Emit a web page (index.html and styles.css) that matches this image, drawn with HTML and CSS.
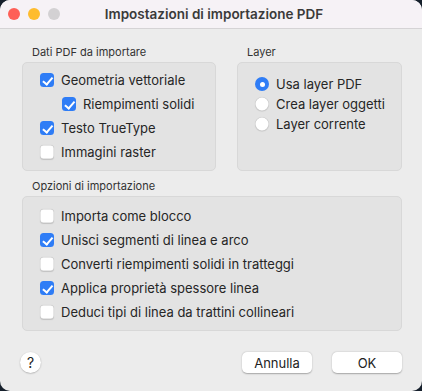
FILE: index.html
```html
<!DOCTYPE html>
<html lang="it">
<head>
    <meta charset="UTF-8">
    <meta name="viewport" content="width=device-width, initial-scale=1.0">
    <title>Impostazioni di importazione PDF</title>
    <link rel="stylesheet" href="styles.css">
</head>
<body>
    <div class="window">
        <div class="titlebar">
            <div class="lights">
                <span class="light red"></span>
                <span class="light yellow"></span>
                <span class="light gray"></span>
            </div>
            <div class="title">Impostazioni di importazione PDF</div>
        </div>

        <div class="content">
            <div class="top-row">
                <div class="group group-data">
                    <div class="group-label">Dati PDF da importare</div>
                    <div class="box box-data">
                        <div class="row"><span class="check on"></span>Geometria vettoriale</div>
                        <div class="row indent"><span class="check on"></span>Riempimenti solidi</div>
                        <div class="row"><span class="check on"></span>Testo TrueType</div>
                        <div class="row"><span class="check"></span>Immagini raster</div>
                    </div>
                </div>
                <div class="group group-layer">
                    <div class="group-label">Layer</div>
                    <div class="box box-layer">
                        <div class="row radio-row"><span class="radio on"></span>Usa layer PDF</div>
                        <div class="row radio-row"><span class="radio"></span>Crea layer oggetti</div>
                        <div class="row radio-row"><span class="radio"></span>Layer corrente</div>
                    </div>
                </div>
            </div>

            <div class="group">
                <div class="group-label">Opzioni di importazione</div>
                <div class="box box-options">
                    <div class="row"><span class="check"></span>Importa come blocco</div>
                    <div class="row"><span class="check on"></span>Unisci segmenti di linea e arco</div>
                    <div class="row"><span class="check"></span>Converti riempimenti solidi in tratteggi</div>
                    <div class="row"><span class="check on"></span>Applica proprietà spessore linea</div>
                    <div class="row"><span class="check"></span>Deduci tipi di linea da trattini collineari</div>
                </div>
            </div>
        </div>

        <div class="footer">
            <button class="help">?</button>
            <div class="buttons">
                <button class="btn">Annulla</button>
                <button class="btn">OK</button>
            </div>
        </div>
    </div>
</body>
</html>
```

FILE: styles.css
```css
:root {
    --accent: #2f7df6;
    --window-bg: #ececec;
    --title-bg: #f6f2f6;
    --box-bg: #e3e3e3;
    --box-border: #d8d8d8;
    --text: #262626;
}

body {
    margin: 0;
    width: 422px;
    height: 391px;
    background: #16202c;
    font-family: Inter, "Liberation Sans", sans-serif;
    color: var(--text);
}

.window {
    width: 422px;
    height: 391px;
    background: var(--window-bg);
    border-radius: 10px;
    overflow: hidden;
    display: flex;
    flex-direction: column;
}

.titlebar {
    height: 28px;
    background: var(--title-bg);
    border-bottom: 1px solid #d5d3d5;
    display: flex;
    align-items: center;
    position: relative;
}

.lights {
    display: flex;
    gap: 8px;
    padding-left: 8px;
}

.light {
    width: 12px;
    height: 12px;
    border-radius: 50%;
}

.red { background: #fe5f57; }
.yellow { background: #febc2e; }
.gray { background: #d3d1d3; }

.title {
    position: absolute;
    left: 0;
    right: 0;
    text-align: center;
    font-size: 13.5px;
    font-weight: 600;
    color: #3a3a3a;
    padding-left: 6px;
}

.content {
    padding: 16px 20px 0 22px;
    display: flex;
    flex-direction: column;
    gap: 8px;
}

.top-row {
    display: flex;
    gap: 21px;
}

.group-data { width: 194px; }
.group-layer { width: 165px; }

.group-label {
    font-size: 11px;
    line-height: 14px;
    padding-left: 10px;
    margin-bottom: 3px;
    color: #333;
}

.box {
    background: var(--box-bg);
    border: 1px solid var(--box-border);
    border-radius: 5px;
    padding-left: 17px;
    box-sizing: border-box;
}

.box-data {
    height: 109px;
    padding-top: 5px;
}

.box-layer {
    height: 109px;
    padding-top: 11px;
}

.box-options {
    height: 135px;
    padding-top: 7px;
}

.row {
    display: flex;
    align-items: center;
    height: 24px;
    font-size: 13px;
}

.radio-row { height: 20px; }

.row.indent { padding-left: 22px; }

.check {
    width: 14px;
    height: 14px;
    border-radius: 3.5px;
    background: #fff;
    box-shadow: inset 0 0 0 0.5px rgba(0, 0, 0, 0.2), 0 0.5px 1px rgba(0, 0, 0, 0.15);
    margin-right: 7px;
    flex: none;
    position: relative;
}

.check.on {
    background: var(--accent);
    box-shadow: none;
}

.check.on::after {
    content: '';
    position: absolute;
    left: 4.5px;
    top: 1.5px;
    width: 3.5px;
    height: 7.5px;
    border: solid #fff;
    border-width: 0 2px 2px 0;
    transform: rotate(40deg);
}

.radio {
    width: 14px;
    height: 14px;
    border-radius: 50%;
    background: #fff;
    box-shadow: inset 0 0 0 0.5px rgba(0, 0, 0, 0.2), 0 0.5px 1px rgba(0, 0, 0, 0.15);
    margin-right: 7px;
    flex: none;
    display: flex;
    align-items: center;
    justify-content: center;
}

.radio.on {
    background: var(--accent);
    box-shadow: none;
}

.radio.on::after {
    content: '';
    width: 5px;
    height: 5px;
    border-radius: 50%;
    background: #fff;
}

.footer {
    display: flex;
    justify-content: space-between;
    align-items: center;
    padding: 21px 20px 0 20px;
}

.help {
    width: 21px;
    height: 21px;
    border-radius: 50%;
    border: none;
    background: #fff;
    box-shadow: 0 0.5px 1.5px rgba(0, 0, 0, 0.3);
    font-family: inherit;
    font-size: 14px;
    color: #222;
    padding: 0;
}

.buttons {
    display: flex;
    gap: 20px;
}

.btn {
    width: 70px;
    height: 21px;
    border: none;
    border-radius: 5px;
    background: #fff;
    box-shadow: 0 0.5px 1.5px rgba(0, 0, 0, 0.3);
    font-family: inherit;
    font-size: 13px;
    color: #222;
    padding: 0;
}
```
